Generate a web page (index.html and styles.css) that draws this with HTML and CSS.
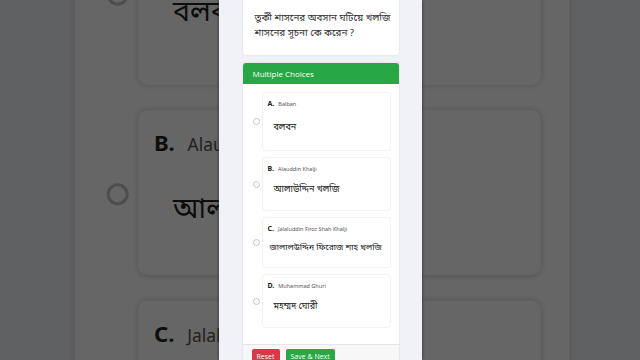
FILE: index.html
```html
<!DOCTYPE html>
<html lang="bn">
<head>
<meta charset="utf-8">
<title>Multiple Choices</title>
<link rel="stylesheet" href="styles.css">
</head>
<body>
<div class="backdrop" id="backdrop" aria-hidden="true"></div>
<div class="shade"></div>
<div class="phone" id="phone">
  <div class="page">
    <section class="card question">
      <p>তুর্কী শাসনের অবসান ঘটিয়ে খলজি<br>শাসনের সূচনা কে করেন ?</p>
    </section>
    <section class="card choices">
      <h2 class="card-header">Multiple Choices</h2>
      <ul class="options">
        <li class="option option--first">
          <input type="radio" name="ans" class="radio">
          <div class="option-box">
            <div class="option-head"><b>A.</b><span>Balban</span></div>
            <p class="option-text">বলবন</p>
          </div>
        </li>
        <li class="option">
          <input type="radio" name="ans" class="radio">
          <div class="option-box">
            <div class="option-head"><b>B.</b><span>Alauddin Khalji</span></div>
            <p class="option-text">আলাউদ্দিন খলজি</p>
          </div>
        </li>
        <li class="option option--long">
          <input type="radio" name="ans" class="radio">
          <div class="option-box">
            <div class="option-head"><b>C.</b><span>Jalaluddin Firoz Shah Khalji</span></div>
            <p class="option-text">জালালউদ্দিন ফিরোজ শাহ খলজি</p>
          </div>
        </li>
        <li class="option">
          <input type="radio" name="ans" class="radio">
          <div class="option-box">
            <div class="option-head"><b>D.</b><span>Muhammad Ghuri</span></div>
            <p class="option-text">মহম্মদ ঘোরী</p>
          </div>
        </li>
      </ul>
      <div class="card-footer">
        <button class="btn btn--red">Reset</button>
        <button class="btn btn--green">Save &amp; Next</button>
      </div>
    </section>
  </div>
</div>
<script>
  // zoomed copy of the screen behind the phone frame
  const copy = document.getElementById('phone').cloneNode(true);
  copy.removeAttribute('id');
  copy.classList.add('phone--copy');
  document.getElementById('backdrop').appendChild(copy);
</script>
</body>
</html>
```

FILE: styles.css
```css
html, body {
  margin: 0;
  height: 100%;
}
body {
  position: relative;
  display: flex;
  justify-content: center;
  overflow: hidden;
  background: #606163;
  font-family: "Noto Sans", "Noto Sans Bengali", "Lohit Bengali", "Open Sans", sans-serif;
  color: #333;
}
p, h2, ul {
  margin: 0;
  padding: 0;
}

.backdrop {
  position: absolute;
  top: 0;
  left: 0;
  right: 0;
  bottom: 0;
  z-index: 1;
  display: flex;
  justify-content: center;
  overflow: hidden;
}
.shade {
  position: absolute;
  top: 0;
  left: 0;
  width: 640px;
  height: 360px;
  z-index: 2;
  background: #000;
  opacity: .6;
}
.phone {
  position: relative;
  z-index: 3;
  flex: none;
  width: 203px;
  height: 360px;
  overflow: hidden;
  background: #f1f2f7;
  box-shadow: 0 0 3px #2a2a2a;
}
.phone--copy {
  z-index: auto;
  transform: scale(3.17);
  box-shadow: none;
}

.page {
  margin-top: -20px;
  padding: 0 23px 0 24px;
}
.card {
  background: #fff;
  border-radius: 3px;
  box-shadow: 0 0 2px rgba(0, 0, 0, .12);
}
.question {
  margin-bottom: 8px;
  padding: 30px 4px 15px 12px;
  font-size: 9.8px;
  line-height: 15px;
  color: #333;
  white-space: nowrap;
}
.card-header {
  height: 21px;
  padding: 0 10px;
  border-radius: 3px 3px 0 0;
  background: #28a745;
  color: #fff;
  font-family: "Open Sans", "Liberation Sans", sans-serif;
  font-size: 8px;
  font-weight: 400;
  line-height: 21px;
}
.options {
  list-style: none;
  display: flex;
  flex-direction: column;
  gap: 8px;
  padding: 9px 9px 17px 10px;
}
.option {
  display: flex;
  align-items: center;
  gap: 3px;
}
.radio {
  flex: none;
  appearance: none;
  margin: 0;
  width: 7px;
  height: 7px;
  border: 1px solid #c4c4c4;
  border-radius: 50%;
  background: #fff;
}
.option-box {
  flex: 1;
  min-width: 0;
  height: 52px;
  box-sizing: border-box;
  padding: 6px 5px 0;
  border-radius: 3px;
  box-shadow: 0 0 2px rgba(0, 0, 0, .18);
}
.option--first .option-box {
  height: 57px;
}
.option--long .option-box {
  height: 49px;
}
.option-head {
  display: flex;
  align-items: baseline;
  gap: 4px;
  height: 10px;
  line-height: 10px;
}
.option-head b {
  font-size: 7px;
  color: #222;
}
.option-head span {
  font-size: 5.5px;
  color: #555;
}
.option-text {
  margin-top: 8px;
  padding-left: 6px;
  font-size: 9px;
  line-height: 14px;
  color: #222;
  white-space: nowrap;
}
.option--first .option-text {
  margin-top: 11px;
}
.option--long .option-text {
  margin-top: 6px;
  padding-left: 2px;
  font-size: 8.5px;
}

.card-footer {
  display: flex;
  gap: 6px;
  padding: 4px 9px;
  border-top: 1px solid #e6e6e6;
  background: #f7f7f7;
}
.btn {
  height: 16px;
  padding: 0 5px;
  border: 0;
  border-radius: 2px;
  color: #fff;
  font-family: "Open Sans", "Liberation Sans", sans-serif;
  font-size: 7px;
  line-height: 16px;
}
.btn--red {
  background: #dc3545;
}
.btn--green {
  background: #28a745;
}
```
